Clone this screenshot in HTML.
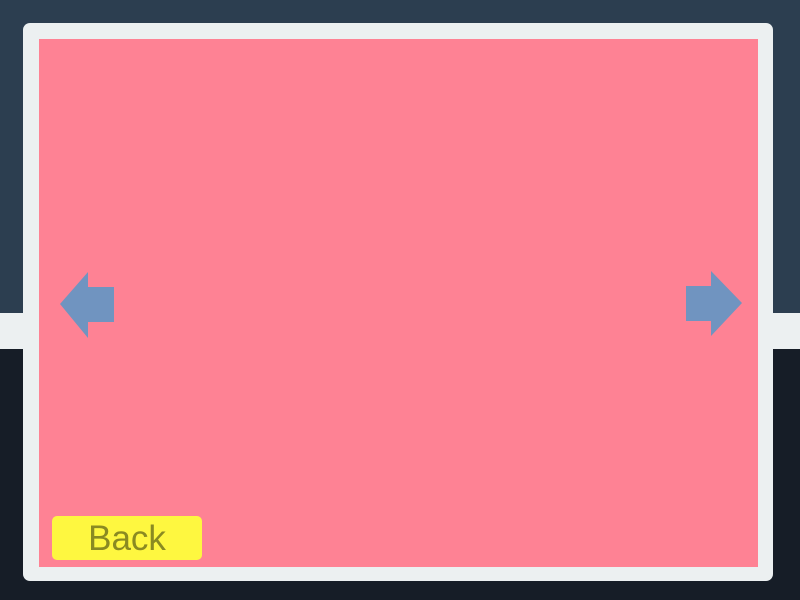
<!DOCTYPE html>
<html><head><style>
body{margin:0;width:800px;height:600px;position:relative;overflow:hidden;background:#161d27;font-family:"Liberation Sans",sans-serif}
.top{position:absolute;left:0;top:0;width:800px;height:313px;background:#2c3e50}
.band{position:absolute;left:0;top:313px;width:800px;height:36px;background:#ecf0f1}
.frame{position:absolute;left:23px;top:23px;width:750px;height:558px;background:#ecf0f1;border-radius:7px}
.pink{position:absolute;left:39px;top:39px;width:719px;height:528px;background:#fe8294}
.btn{position:absolute;left:52px;top:516px;width:150px;height:44px;background:#fef740;border-radius:5px;color:#8a8a22;font-size:35px;text-align:center;line-height:46px}
</style></head><body>
<div class="top"></div><div class="band"></div>
<div class="frame"></div><div class="pink"></div>
<svg width="800" height="600" style="position:absolute;left:0;top:0">
<polygon fill="#7094c0" points="60,304 88,272 88,287 114,287 114,322 88,322 88,338"/>
<polygon fill="#7094c0" points="742,303 711,271 711,286 686,286 686,321 711,321 711,336"/>
</svg>
<div class="btn">Back</div>
</body></html>
